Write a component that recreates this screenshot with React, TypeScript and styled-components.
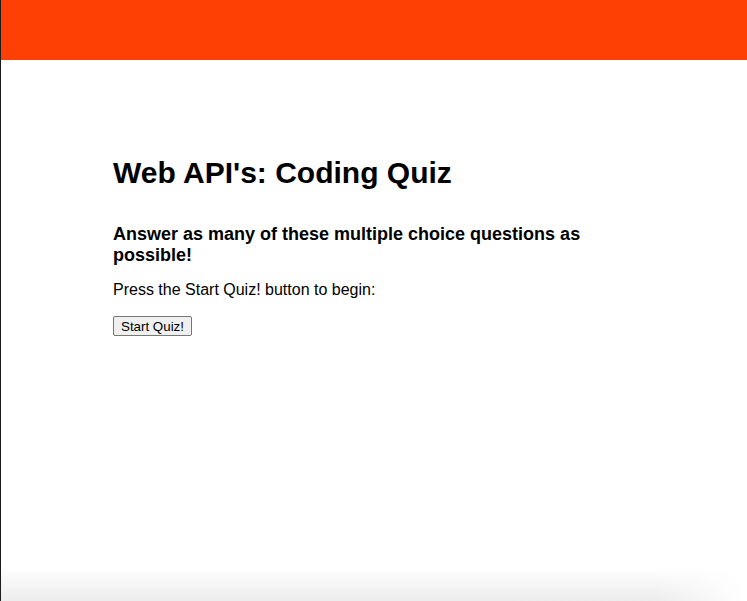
import React from 'react';
import styled, { createGlobalStyle } from 'styled-components';

const GlobalStyle = createGlobalStyle`
    html, body {
        margin: 0;
        padding: 0;
        background: #fff;
    }

    body {
        font-family: "Liberation Sans", Arial, Helvetica, sans-serif;
        color: #000;
        min-height: 601px;
        border-left: 1px solid #1c1c1c;
        box-sizing: border-box;
    }
`;

const Page = styled.div`
    min-height: 601px;
    display: flex;
    flex-direction: column;
`;

const Header = styled.header`
    height: 60px;
    background-color: #ff4005;
`;

const Main = styled.main`
    padding: 96px 0 0 112px;
    width: 530px;
`;

const Titulo = styled.h1`
    font-size: 30px;
    font-weight: bold;
    margin: 0;
`;

const Subtitulo = styled.h3`
    font-size: 18px;
    font-weight: bold;
    margin: 34px 0 0;
`;

const Instrucao = styled.p`
    font-size: 16px;
    margin: 15px 0 0;
`;

const BotaoIniciar = styled.button`
    margin-top: 17px;
    font-family: "Liberation Sans", Arial, sans-serif;
    font-size: 13.33px;
    color: #000;
    background-color: #efefef;
    border: 1px solid #767676;
    border-radius: 2px;
    padding: 2px 7px 1px;
    cursor: pointer;
`;

const SombraRodape = styled.div`
    position: fixed;
    left: 1px;
    right: 0;
    bottom: 0;
    height: 34px;
    pointer-events: none;
    background: linear-gradient(to bottom, rgba(239, 239, 239, 0), rgba(236, 236, 236, 1));
    -webkit-mask-image: linear-gradient(to right, #000 88%, transparent 100%);
    mask-image: linear-gradient(to right, #000 88%, transparent 100%);
`;

const App: React.FC = () => {
    return (
        <Page>
            <GlobalStyle />
            <Header />
            <Main>
                <Titulo>Web API's: Coding Quiz</Titulo>
                <Subtitulo>Answer as many of these multiple choice questions as possible!</Subtitulo>
                <Instrucao>Press the Start Quiz! button to begin:</Instrucao>
                <BotaoIniciar>Start Quiz!</BotaoIniciar>
            </Main>
            <SombraRodape />
        </Page>
    );
};

export default App;
